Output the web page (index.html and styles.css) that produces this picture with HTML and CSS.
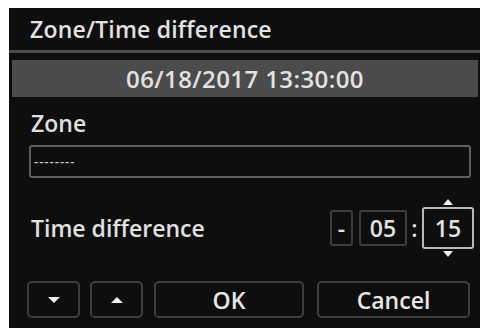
FILE: index.html
```html
<!DOCTYPE html>
<html>
<head>
<meta charset="utf-8">
<link rel="stylesheet" href="styles.css">
</head>
<body>
<div class="panel">
  <div class="title">Zone/Time difference</div>
  <div class="rule"></div>
  <div class="datebar">06/18/2017 13:30:00</div>
  <div class="label">Zone</div>
  <div class="input"><span class="dashes">--------</span></div>
  <div class="timerow">
    <div class="label tlabel">Time difference</div>
    <div class="fields">
      <div class="box sign">-</div>
      <div class="box hh">05</div>
      <div class="colon">:</div>
      <div class="box mm sel">15
        <span class="arr up"></span>
        <span class="arr down"></span>
      </div>
    </div>
  </div>
  <div class="buttons">
    <div class="btn small"><span class="tri tdown"></span></div>
    <div class="btn small"><span class="tri tup"></span></div>
    <div class="btn wide">OK</div>
    <div class="btn wide cancel">Cancel</div>
  </div>
</div>
</body>
</html>
```

FILE: styles.css
```css
html, body {
  margin: 0;
  padding: 0;
  background: #ffffff;
}
body {
  width: 484px;
  height: 331px;
  overflow: hidden;
  font-family: "Open Sans", "Noto Sans", sans-serif;
  font-weight: 600;
  color: #e4e4e4;
}
.panel {
  margin: 8px 0 0 9px;
  width: 471px;
  height: 320px;
  background: #0e0e0e;
  display: flex;
  flex-direction: column;
  box-sizing: border-box;
}
.title {
  height: 42px;
  line-height: 42px;
  padding-left: 21px;
  font-size: 23px;
  letter-spacing: 0.2px;
  color: #e2e2e2;
}
.rule {
  height: 3px;
  background: #4a4a4a;
}
.datebar {
  margin: 7px 2px 0 3px;
  height: 37px;
  line-height: 37px;
  background: #4b4b4b;
  text-align: center;
  font-size: 24px;
  letter-spacing: 0.4px;
  color: #e2e2e2;
}
.label {
  font-size: 23px;
  color: #e0e0e0;
  padding-left: 22px;
}
.panel > .label {
  margin-top: 9px;
  height: 34px;
  line-height: 34px;
}
.input {
  margin: 5px 9px 0 20px;
  height: 33px;
  border: 2px solid #5e5e5e;
  border-radius: 3px;
  box-sizing: border-box;
  display: flex;
  align-items: center;
  padding-left: 3px;
}
.dashes {
  font-size: 13px;
  letter-spacing: 1px;
  color: #cfcfcf;
  line-height: 1;
}
.timerow {
  margin-top: 29px;
  height: 42px;
  display: flex;
  align-items: center;
  justify-content: space-between;
  padding-right: 6px;
}
.tlabel {
  padding-left: 22px;
}
.fields {
  display: flex;
  align-items: center;
}
.box {
  position: relative;
  height: 36px;
  border: 2px solid #3c3c3c;
  border-radius: 3px;
  box-sizing: border-box;
  display: flex;
  align-items: center;
  justify-content: center;
  font-size: 23px;
  color: #e2e2e2;
}
.sign {
  width: 23px;
}
.hh {
  width: 48px;
  margin-left: 6px;
}
.colon {
  width: 15px;
  text-align: center;
  font-size: 23px;
}
.mm {
  width: 52px;
  height: 42px;
  border-color: #b8b8b8;
}
.arr {
  position: absolute;
  left: 50%;
  margin-left: -5px;
  width: 0;
  height: 0;
  border-left: 5px solid transparent;
  border-right: 5px solid transparent;
}
.arr.up {
  top: -10px;
  border-bottom: 6px solid #f0f0f0;
}
.arr.down {
  bottom: -10px;
  border-top: 6px solid #f0f0f0;
}
.buttons {
  margin: 32px 10px 0 18px;
  display: flex;
  gap: 10px;
}
.btn {
  height: 37px;
  border: 2px solid #3e3e3e;
  border-radius: 5px;
  box-sizing: border-box;
  display: flex;
  align-items: center;
  justify-content: center;
  font-size: 23px;
  color: #e6e6e6;
}
.small {
  width: 53px;
}
.wide {
  width: 150px;
  margin-left: 1px;
}
.cancel {
  width: 153px;
  margin-left: 3px;
}
.tri {
  width: 0;
  height: 0;
  border-left: 6px solid transparent;
  border-right: 6px solid transparent;
}
.tdown {
  border-top: 6px solid #f0f0f0;
}
.tup {
  border-bottom: 6px solid #f0f0f0;
}
```
